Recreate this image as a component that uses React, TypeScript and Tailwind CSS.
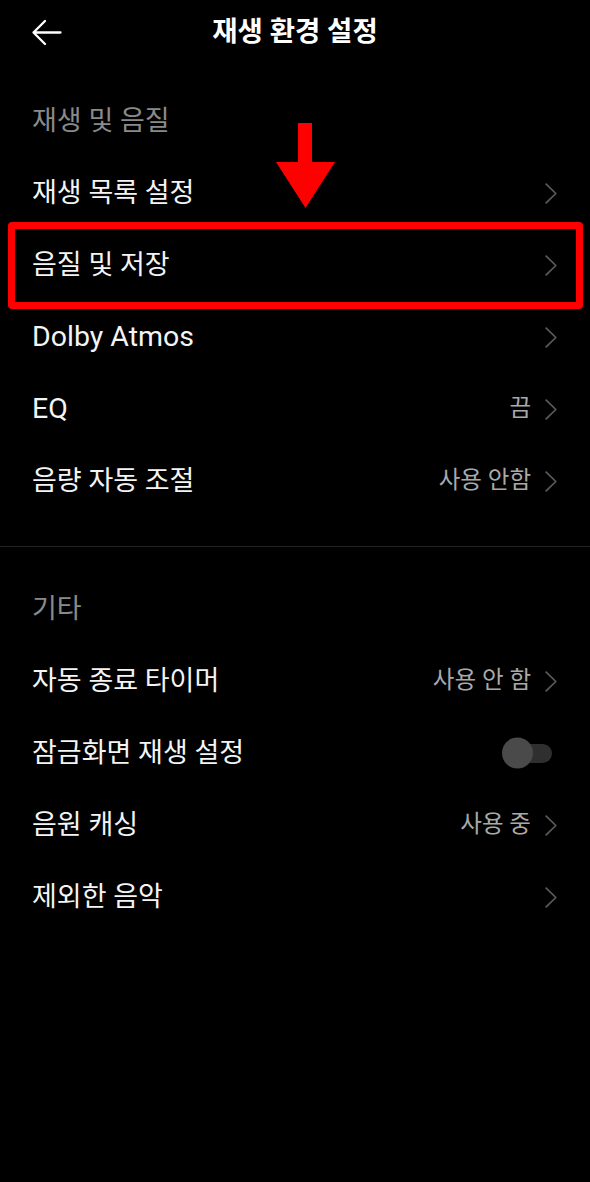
import type { ReactNode } from 'react';

type Row = {
  label: string;
  value?: string;
  toggle?: boolean;
  latin?: boolean;
  highlight?: boolean;
};

const playbackRows: Row[] = [
  { label: '재생 목록 설정' },
  { label: '음질 및 저장', highlight: true },
  { label: 'Dolby Atmos', latin: true },
  { label: 'EQ', value: '끔', latin: true },
  { label: '음량 자동 조절', value: '사용 안함' },
];

const otherRows: Row[] = [
  { label: '자동 종료 타이머', value: '사용 안 함' },
  { label: '잠금화면 재생 설정', toggle: true },
  { label: '음원 캐싱', value: '사용 중' },
  { label: '제외한 음악' },
];

function Chevron() {
  return (
    <svg width="12" height="21" viewBox="0 0 12 21" fill="none">
      <path d="M1.2 1.2 L10.8 10.5 L1.2 19.8" stroke="#5b5b5b" strokeWidth="1.7" strokeLinecap="round" strokeLinejoin="round" />
    </svg>
  );
}

function Toggle() {
  return (
    <div className="relative mr-[5px] h-[19px] w-[46px] rounded-full bg-[#2f2f2f]">
      <div className="absolute -left-[4px] top-1/2 h-[31px] w-[31px] -translate-y-1/2 rounded-full bg-[#4a4a4a]" />
    </div>
  );
}

function SectionTitle({ children }: { children: ReactNode }) {
  return (
    <div className="flex h-[72px] items-center px-[32px] text-[27px] text-[#8a8a8a]">{children}</div>
  );
}

function SettingRow({ row }: { row: Row }) {
  return (
    <div className="relative flex h-[72px] items-center justify-between pl-[32px] pr-[33px]">
      <span className={row.latin ? 'text-[28.5px] text-[#f4f4f4]' : 'text-[27px] text-[#f4f4f4]'}>{row.label}</span>
      {row.toggle ? (
        <Toggle />
      ) : (
        <div className="flex items-center gap-[14px]">
          {row.value && <span className="text-[23.5px] text-[#a9a9a9]">{row.value}</span>}
          <Chevron />
        </div>
      )}
      {row.highlight && (
        <div className="absolute -top-[7px] -bottom-[8px] left-[8px] right-[7px] rounded-[4px] border-[7px] border-[#ff0000]" />
      )}
    </div>
  );
}

export default function App() {
  return (
    <div className="relative min-h-[1182px] w-full bg-black font-[Roboto,'Noto_Sans_CJK_KR',sans-serif]">
      <header className="grid h-[64px] grid-cols-[1fr_auto_1fr] items-center">
        <div className="pl-[31px]">
          <svg width="31" height="27" viewBox="0 0 31 27" fill="none">
            <path d="M29.5 13.5 H2.5 M14 2 L2.5 13.5 L14 25" stroke="#ffffff" strokeWidth="2.3" strokeLinecap="round" strokeLinejoin="round" />
          </svg>
        </div>
        <h1 className="text-[27.5px] font-bold text-white">재생 환경 설정</h1>
        <div />
      </header>

      <div className="mt-[21px]">
        <SectionTitle>재생 및 음질</SectionTitle>
        {playbackRows.map((row) => (
          <SettingRow key={row.label} row={row} />
        ))}
      </div>

      <div className="mt-[29px] h-px bg-[#222222]" />

      <div className="mt-[26px]">
        <SectionTitle>기타</SectionTitle>
        {otherRows.map((row) => (
          <SettingRow key={row.label} row={row} />
        ))}
      </div>

      {/* annotation arrow */}
      <svg className="absolute left-[276px] top-[123px]" width="60" height="86" viewBox="0 0 60 86">
        <rect x="22" y="0" width="14" height="40" fill="#ff0000" />
        <polygon points="0,39 59,39 29.5,85" fill="#ff0000" />
      </svg>
    </div>
  );
}
